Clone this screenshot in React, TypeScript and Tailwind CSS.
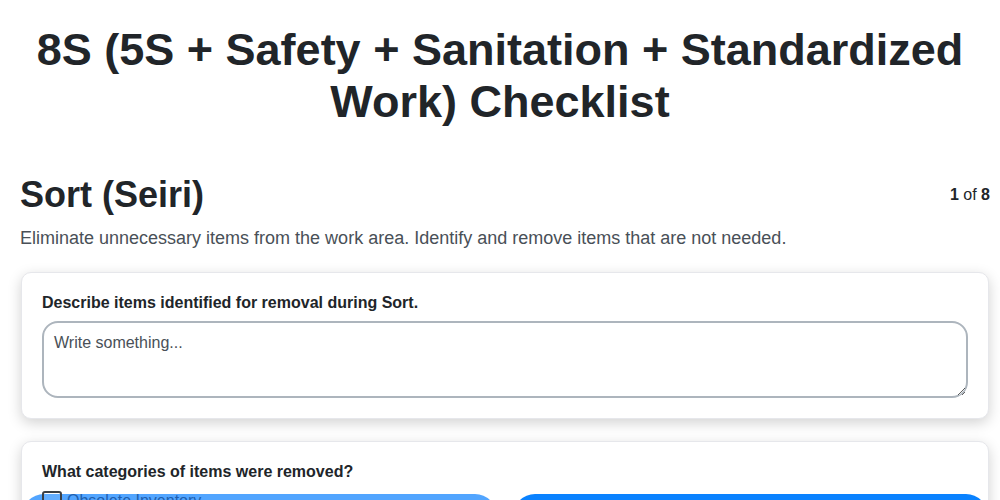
import React from 'react';

const categories = ['Obsolete Inventory', 'Broken Tools'];

const App = () => {
  return (
    <div className="min-h-[500px] bg-white pt-6 font-['Liberation_Sans',Arial,sans-serif] text-[#212529]">
      {/* Page title */}
      <h1 className="px-5 text-center text-[45px] font-bold leading-[52px]">
        8S (5S + Safety + Sanitation + Standardized Work) Checklist
      </h1>

      <div className="pl-5 pr-[10px]">
        {/* Step header */}
        <div className="mt-[45px] flex items-center justify-between">
          <h2 className="text-[36px] font-bold leading-[1.2]">Sort (Seiri)</h2>
          <div className="text-base">
            <span className="font-bold">1</span> of <span className="font-bold">8</span>
          </div>
        </div>
        <p className="mt-[9px] text-lg leading-[1.5] text-[#495057]">
          Eliminate unnecessary items from the work area. Identify and remove items that are not needed.
        </p>

        {/* Question 1 */}
        <section className="mx-px mt-5 rounded-[10px] border border-[#e6e7eb] bg-white p-5 shadow-[0_4px_14px_rgba(0,0,0,0.18)]">
          <label className="block text-base font-bold leading-[1.2]">
            Describe items identified for removal during Sort.
          </label>
          <textarea
            placeholder="Write something..."
            className="mt-[9px] block h-[77px] w-full rounded-2xl border-2 border-[#adb5bd] px-[10px] py-2 text-base placeholder:text-[#495057] focus:outline-none"
          />
        </section>

        {/* Question 2 */}
        <section className="mx-px mt-[22px] rounded-[10px] border border-[#e6e7eb] bg-white p-5 shadow-[0_4px_14px_rgba(0,0,0,0.18)]">
          <label className="block text-base font-bold leading-[1.2]">
            What categories of items were removed?
          </label>
          <div className="-mx-5 mt-3 grid grid-cols-2 gap-4">
            {categories.map((c, i) => (
              <div
                key={c}
                className={
                  i === 0
                    ? 'flex h-12 items-start gap-[5px] rounded-[22px] bg-[#52a5ff] px-5'
                    : 'flex h-12 items-start gap-[5px] rounded-[22px] bg-[#0a82ff] px-5'
                }
              >
                {i === 0 && (
                  <>
                    <span className="-mt-[3px] h-5 w-5 shrink-0 rounded-[3px] border-2 border-[#3a3f45] bg-white/10" />
                    <span className="-mt-[5px] text-base leading-6 text-[#1f5fae]">{c}</span>
                  </>
                )}
              </div>
            ))}
          </div>
        </section>
      </div>
    </div>
  );
};

export default App;
